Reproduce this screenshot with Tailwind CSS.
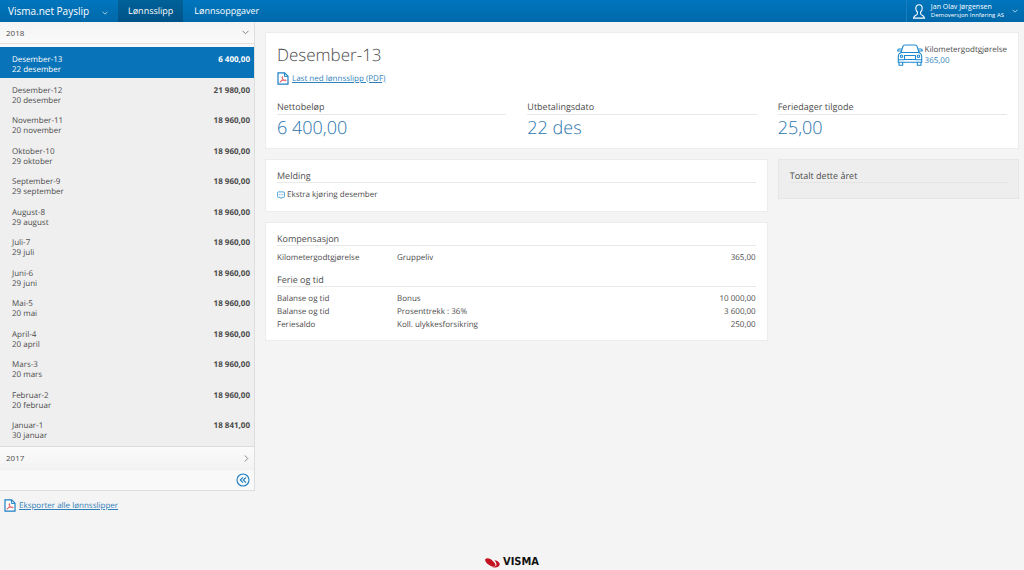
<!DOCTYPE html>
<html lang="no">
<head>
<meta charset="utf-8">
<meta name="viewport" content="width=device-width, initial-scale=1">
<title>Visma.net Payslip</title>
<script src="https://cdn.jsdelivr.net/npm/@tailwindcss/browser@4"></script>
</head>
<body class="flex min-h-screen flex-col bg-[#f4f4f4] font-['Open_Sans',sans-serif] text-[8px] leading-[10px] text-[#4c4c4c] [text-rendering:geometricPrecision]">
<svg class="hidden">
  <symbol id="pdf" viewBox="0 0 12 13">
    <path d="M1 .8h6.6L11 4.2v8H1z" fill="#fff" stroke="#1b80c4" stroke-width="1.2"/>
    <path d="M7.4 1v3.4h3.4" fill="none" stroke="#1b80c4" stroke-width="1"/>
    <path d="M3 10.2C4.6 9.3 6 6.800 5.700 5c-.1-.7-.8-.5-.7.2.2 1.800 2 3.600 3.700 3.600.8 0 .7-.8-.1-.8C6.800 8 4.600 8.600 3.200 9.600c-.5.4-.5.800-.2.600z" fill="none" stroke="#e04a50" stroke-width=".8"/>
  </symbol>
</svg>
<header class="flex h-[22px] shrink-0 items-stretch bg-linear-to-b from-[#0076be] to-[#0068a9] text-white">
  <button class="flex w-[118px] items-center justify-between pr-[10px] pl-2 text-[10px]">
    <span>Visma.net Payslip</span>
    <svg class="mt-[3px] h-1 w-[6px]" viewBox="0 0 6 4" fill="none" stroke="#b5d8ef" stroke-width=".9"><path d="M.5.7 3 3.200 5.500.7"/></svg>
  </button>
  <nav class="flex flex-1 items-stretch text-[9px]">
    <a href="#" class="flex items-center bg-linear-to-b from-[#006199] to-[#005387] px-[10px]">Lønnsslipp</a>
    <a href="#" class="flex items-center px-[11px]">Lønnsoppgaver</a>
  </nav>
  <button class="flex items-center border-l border-[#1a7dbd] pr-[6px] pl-[6px] text-left">
    <svg class="mr-[6px] h-[15px] w-3" viewBox="0 0 12 15" fill="none" stroke="#fff" stroke-width="1.100"><path d="M6 .8c2 0 3.200 1.400 3.200 3.500 0 1.500-.6 2.900-1.600 3.700v1.800c-.2 1.200 3.600 1.200 3.900 4.300H.5c.3-3.100 4.100-3.100 3.900-4.300V8C3.400 7.200 2.800 5.800 2.800 4.300 2.800 2.200 4 .8 6 .8z"/></svg>
    <span class="block">
      <span class="block text-[7px] leading-[8px]">Jan Olav Jørgensen</span>
      <span class="block text-[6px] leading-[8px]">Demoversjon Innføring AS</span>
    </span>
    <svg class="ml-2 h-1 w-[6px]" viewBox="0 0 6 4" fill="none" stroke="#b5d8ef" stroke-width=".9"><path d="M.5.7 3 3.200 5.500.7"/></svg>
  </button>
</header>

<div class="flex flex-1 items-start">
  <aside class="w-[255px] shrink-0">
    <div class="border-r border-b border-[#dedede] bg-[#efefef]">
      <button class="flex h-[22px] w-full items-center justify-between border-b border-[#e2e2e2] bg-linear-to-b from-[#f4f4f4] to-[#fafafa] pr-[5px] pl-[6px]">
        <span>2018</span>
        <svg class="h-[5px] w-[7px]" viewBox="0 0 7 5" fill="none" stroke="#777" stroke-width=".9"><path d="M.5.8l3 3 3-3"/></svg>
      </button>
      <ul id="slips" class="grid h-[400px] auto-rows-fr border-t-[3px] border-[#f8f8f8]"></ul>
      <button class="mt-[2px] flex h-[23px] w-full items-center justify-between border-t border-[#dcdcdc] bg-linear-to-b from-[#fbfbfb] to-[#f3f3f3] pr-[5px] pl-[6px]">
        <span>2017</span>
        <svg class="h-[7px] w-[5px]" viewBox="0 0 5 7" fill="none" stroke="#777" stroke-width=".9"><path d="M.8.5l3 3-3 3"/></svg>
      </button>
      <div class="flex h-[21px] items-center justify-end border-t border-[#f0f0f0] bg-[#f9f9f9] pr-1">
        <button aria-label="Skjul meny">
          <svg class="h-[14px] w-[14px]" viewBox="0 0 14 14" fill="none" stroke="#1b7dc0" stroke-width="1.100"><circle cx="7" cy="7" r="6"/><path d="M7 4.300 4.300 7 7 9.700M10 4.300 7.300 7 10 9.700"/></svg>
        </button>
      </div>
    </div>
    <a href="#" class="mt-2 ml-1 flex items-center gap-[3px] text-[#2f7fb8] underline"><svg class="h-[13px] w-3"><use href="#pdf"/></svg>Eksporter alle lønnsslipper</a>
  </aside>

  <main class="flex min-w-0 flex-1 flex-col gap-[10px] pt-[10px] pr-[5px] pl-[10px]">
    <section class="border border-[#ececec] bg-white px-[11px] pt-[10px] pb-[7px]">
      <div class="flex items-start justify-between">
        <div>
          <h1 class="text-[17px] leading-6 font-light">Desember-13</h1>
          <a href="#" class="mt-[5px] flex items-center gap-[3px] text-[#2f7fb8] underline"><svg class="h-[13px] w-3"><use href="#pdf"/></svg>Last ned lønnsslipp (PDF)</a>
        </div>
        <div class="mt-px flex items-center gap-[2px]">
          <svg class="h-[22px] w-[26px]" viewBox="0 0 26 22" fill="none" stroke="#1b88cf" stroke-width="1.100" stroke-linejoin="round">
            <path d="M4 8.500 6 2.200C6.300 1.200 7 1 8 1h10c1 0 1.700.2 2 1.200l2 6.300z"/>
            <path d="M4 8.500C2 9.500 1.300 10.300 1.300 12v6.200h23.400V12c0-1.700-.7-2.500-2.700-3.500M4.300 7H.8v-.8c0-.7.5-1.200 1.200-1.200h2.800M21.700 7h3.500v-.8c0-.7-.5-1.200-1.200-1.200h-2.800M2 18.300v3h3.700v-3M20.300 18.300v3H24v-3M7.500 11.500h11v4h-11zM1.500 15.700h6M18.500 15.700h6"/>
            <circle cx="4.500" cy="12.200" r="1.200"/><circle cx="21.500" cy="12.200" r="1.200"/>
          </svg>
          <div class="leading-[11px]"><p>Kilometergodtgjørelse</p><p class="text-[#2f7fb8]">365,00</p></div>
        </div>
      </div>
      <dl class="mt-[15px] grid grid-cols-3 gap-[21px] text-[9px]">
        <div><dt class="border-b border-[#e8e8e8] pb-px leading-[13px]">Nettobeløp</dt><dd class="text-[18px] leading-[26px] font-light text-[#2a75ae]">6 400,00</dd></div>
        <div><dt class="border-b border-[#e8e8e8] pb-px leading-[13px]">Utbetalingsdato</dt><dd class="text-[18px] leading-[26px] font-light text-[#2a75ae]">22 des</dd></div>
        <div><dt class="border-b border-[#e8e8e8] pb-px leading-[13px]">Feriedager tilgode</dt><dd class="text-[18px] leading-[26px] font-light text-[#2a75ae]">25,00</dd></div>
      </dl>
    </section>

    <div class="grid grid-cols-[502fr_241fr] items-start gap-[10px]">
      <div class="flex flex-col gap-[10px]">
        <section class="border border-[#ececec] bg-white px-[11px] pt-[10px] pb-[11px]">
          <h2 class="border-b border-[#e8e8e8] text-[9px] leading-3">Melding</h2>
          <p class="mt-[7px] flex items-center gap-[2px]">
            <svg class="h-[9px] w-2" viewBox="0 0 8 9" fill="none" stroke="#2a8fd2" stroke-width=".8"><path d="M1.400.9h5.200q1 0 1 1v3.500q0 1-1 1H4.800L4 7.600l-.8-1.200H1.400q-1 0-1-1V1.900q0-1 1-1z"/><path d="M1.800 3.700h4.400" stroke-dasharray="1 .7"/></svg>
            Ekstra kjøring desember
          </p>
        </section>
        <section class="border border-[#ececec] bg-white px-[11px] pt-[10px] pb-[9px]">
          <h2 class="border-b border-[#e8e8e8] text-[9px] leading-3">Kompensasjon</h2>
          <table class="mt-[5px] w-full table-fixed leading-[13px]">
            <tbody><tr><td class="w-[120px]">Kilometergodtgjørelse</td><td>Gruppeliv</td><td class="w-[80px] text-right">365,00</td></tr></tbody>
          </table>
          <h2 class="mt-[10px] border-b border-[#e8e8e8] text-[9px] leading-3">Ferie og tid</h2>
          <table class="mt-[5px] w-full table-fixed leading-[13px]">
            <tbody>
              <tr><td class="w-[120px]">Balanse og tid</td><td>Bonus</td><td class="w-[80px] text-right">10 000,00</td></tr>
              <tr><td>Balanse og tid</td><td>Prosenttrekk : 36%</td><td class="text-right">3 600,00</td></tr>
              <tr><td>Feriesaldo</td><td>Koll. ulykkesforsikring</td><td class="text-right">250,00</td></tr>
            </tbody>
          </table>
        </section>
      </div>
      <section class="border border-[#e6e6e6] bg-[#eee] px-[11px] pt-[10px] pb-[15px]">
        <h2 class="border-b border-[#e4e4e4] text-[9px] leading-3">Totalt dette året</h2>
      </section>
    </div>
  </main>
</div>

<footer class="flex items-center justify-center gap-[3px] pb-[2px]">
  <svg class="h-[11px] w-[15px]" viewBox="0 0 15 11" fill="#c4101f"><path d="M.3 2.200C1.800.6 5 1.400 7.300 3.400c1.600 1.400 3 3.300 3.300 4.800C9.500 10 6.500 9.800 3.400 7.500 1 5.800-.3 3.600.3 2.200z"/><path d="M9.500 3.300c2.300.2 4.300 1.400 5.100 3.100.6 2.200-1.400 4-4.400 4.100-1.800 0-3.400-.4-4.700-1.100 2.700.7 5 .3 5.900-1.100.4-1.300-.5-3.300-1.900-5z"/></svg>
  <span class="font-['DejaVu_Sans_Condensed',sans-serif] text-[11px] leading-3 font-bold text-[#111]">VISMA</span>
</footer>

<script>
const slips = [
  ['Desember-13', '22 desember', '6 400,00'],
  ['Desember-12', '20 desember', '21 980,00'],
  ['November-11', '20 november', '18 960,00'],
  ['Oktober-10', '29 oktober', '18 960,00'],
  ['September-9', '29 september', '18 960,00'],
  ['August-8', '29 august', '18 960,00'],
  ['Juli-7', '29 juli', '18 960,00'],
  ['Juni-6', '29 juni', '18 960,00'],
  ['Mai-5', '20 mai', '18 960,00'],
  ['April-4', '20 april', '18 960,00'],
  ['Mars-3', '20 mars', '18 960,00'],
  ['Februar-2', '20 februar', '18 960,00'],
  ['Januar-1', '30 januar', '18 841,00'],
];
document.getElementById('slips').innerHTML = slips.map(([name, date, sum], i) => `
  <li class="flex"><a href="#" class="${i ? 'flex flex-1 justify-between pt-2 pr-1 pl-3' : 'flex flex-1 justify-between bg-[#0873b8] pt-2 pr-1 pl-3 text-white'}">
    <span>${name}<br>${date}</span><b>${sum}</b></a></li>`).join('');
</script>
</body>
</html>
